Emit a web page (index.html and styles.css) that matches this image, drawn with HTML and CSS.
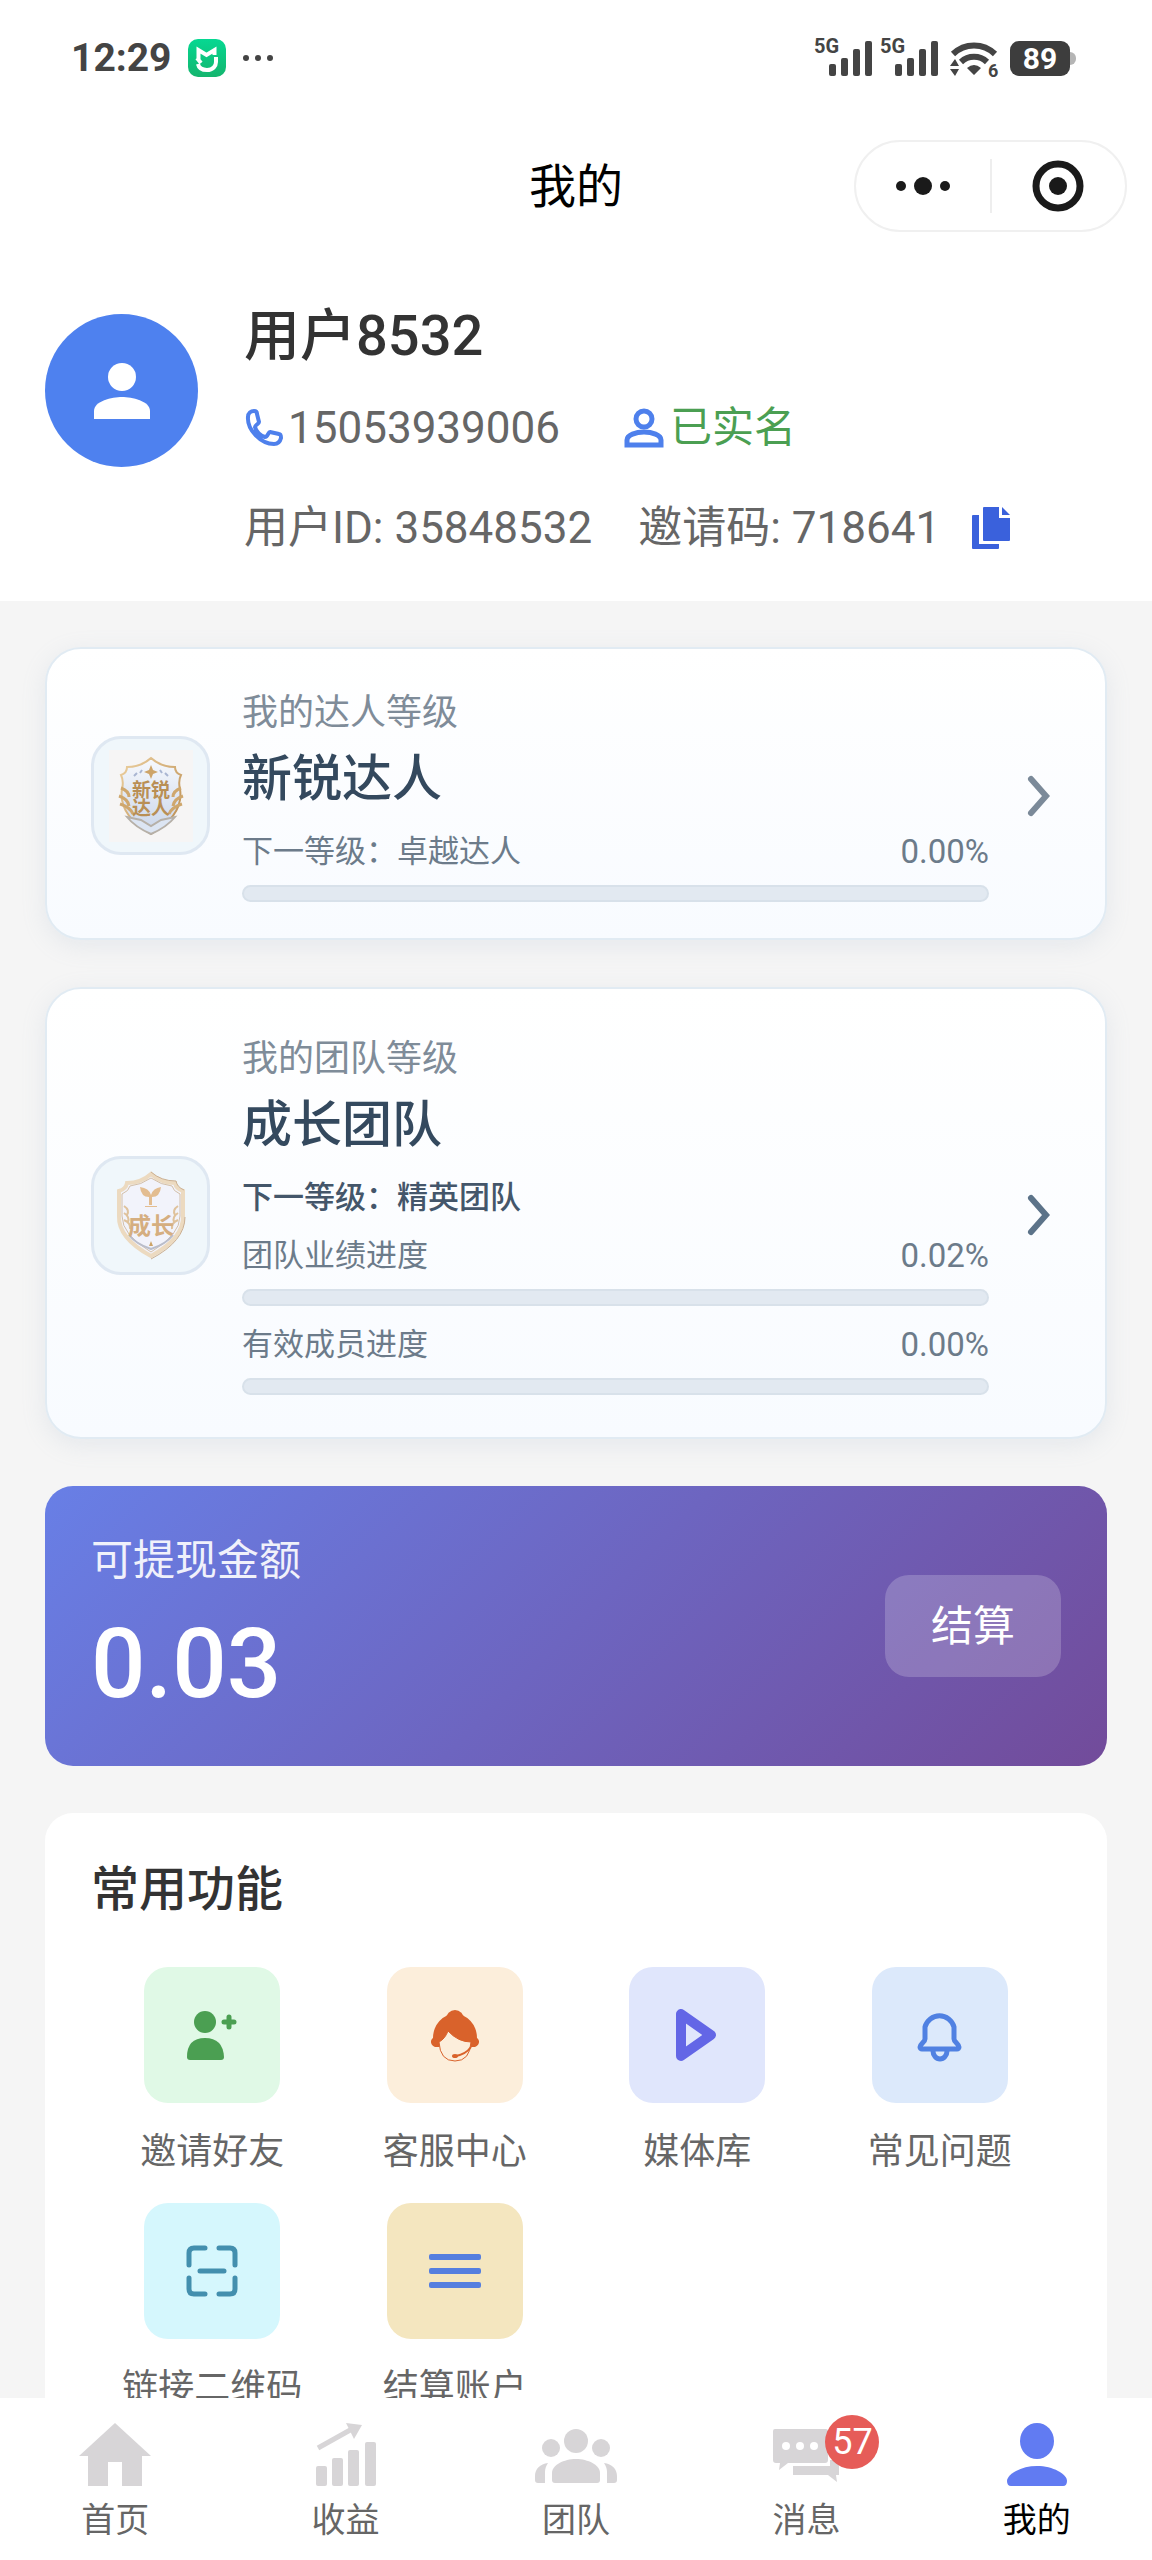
FILE: index.html
```html
<!DOCTYPE html>
<html lang="zh-CN">
<head>
  <meta charset="UTF-8">
  <meta name="viewport" content="width=device-width, initial-scale=1.0">
  <title>我的</title>
  <link rel="stylesheet" href="styles.css">
</head>
<body>
  <div class="app">
    <div class="status-bar">
      <span class="status-time">12:29</span>
      <svg class="status-app" width="38" height="38" viewBox="0 0 38 38">
        <defs>
          <linearGradient id="mi" x1="0" y1="0" x2="0" y2="1">
            <stop offset="0" stop-color="#06d892"/>
            <stop offset="1" stop-color="#14b56e"/>
          </linearGradient>
        </defs>
        <rect width="38" height="38" rx="10" fill="url(#mi)"/>
        <path d="M10.500 20V11l8 5 8-5v5M10 25c1 5 5 6 9 6 6 0 9-4 9-8v-5M9 19l4 5" fill="none" stroke="#fff" stroke-width="4"/>
      </svg>
      <svg width="32" height="8" viewBox="0 0 32 8" fill="#444">
        <circle cx="4" cy="4" r="3"/><circle cx="16" cy="4" r="3"/><circle cx="28" cy="4" r="3"/>
      </svg>
      <div class="status-right">
        <svg width="60" height="48" viewBox="0 -2 60 48" fill="#444">
          <text class="signal-text" x="0" y="17">5G</text>
          <rect x="15" y="28" width="7" height="12" rx="2"/>
          <rect x="27" y="22" width="7" height="18" rx="2"/>
          <rect x="39" y="13" width="7" height="27" rx="2"/>
          <rect x="51" y="5" width="7" height="35" rx="2"/>
        </svg>
        <svg width="60" height="48" viewBox="0 -2 60 48" fill="#444">
          <text class="signal-text" x="0" y="17">5G</text>
          <rect x="15" y="28" width="7" height="12" rx="2"/>
          <rect x="27" y="22" width="7" height="18" rx="2"/>
          <rect x="39" y="13" width="7" height="27" rx="2"/>
          <rect x="51" y="5" width="7" height="35" rx="2"/>
        </svg>
        <svg width="58" height="48" viewBox="-3 -2 58 48" fill="#444">
          <path d="M4 18a30 30 0 0 1 42 0" fill="none" stroke="#444" stroke-width="6"/>
          <path d="M12 26a19 19 0 0 1 26 0" fill="none" stroke="#444" stroke-width="6"/>
          <path d="M18 32q7-6 14 0l-7 7zM1 33h9l-4 7zM1 30h9l-4-7z"/>
          <text class="wifi-text" x="39" y="41">6</text>
        </svg>
        <svg width="66" height="48" viewBox="0 -2 66 48">
          <rect x="52" y="16" width="14" height="13" rx="6" fill="#b5b5b5"/>
          <rect x="0" y="5" width="60" height="35" rx="9" fill="#3d3d3d"/>
          <text class="battery-text" x="30" y="33" text-anchor="middle">89</text>
        </svg>
      </div>
    </div>

    <header class="nav-bar">
      <h1 class="nav-title">我的</h1>
      <div class="capsule">
        <button class="capsule-btn" type="button" aria-label="更多">
          <svg width="56" height="52" viewBox="0 0 56 52" fill="#1a1a1a">
            <circle cx="6" cy="26" r="5"/><circle cx="28" cy="26" r="9"/><circle cx="50" cy="26" r="5"/>
          </svg>
        </button>
        <button class="capsule-btn" type="button" aria-label="关闭">
          <svg width="52" height="52" viewBox="0 0 52 52">
            <circle cx="26" cy="26" r="22" fill="none" stroke="#1a1a1a" stroke-width="7"/>
            <circle cx="26" cy="26" r="9" fill="#1a1a1a"/>
          </svg>
        </button>
      </div>
    </header>

    <main class="content">
      <section class="profile">
        <div class="avatar">
          <svg width="56" height="56" viewBox="0 0 56 56" fill="#fff">
            <circle cx="28" cy="14" r="14"/>
            <path d="M0 56v-8c0-10 18-14 28-14s28 4 28 14v8z"/>
          </svg>
        </div>
        <div class="profile-info">
          <h2 class="profile-name">用户8532</h2>
          <div class="profile-row profile-row--contact">
            <span class="profile-item">
              <svg width="44" height="40" viewBox="0 0 44 40" fill="none" stroke="#4e80ec" stroke-width="4" stroke-linejoin="round">
                <path d="M4 9c0-4 3-6 6-6 2 0 3 1 3 3l2 8c0 2-4 3-4 5 1 5 6 9 10 10 3 0 3-5 5-5l9 2c2 0 2 2 2 4-1 4-3 6-7 6C17 36 3 22 4 9z"/>
              </svg>
              15053939006
            </span>
            <span class="profile-item profile-item--verified">
              <svg width="46" height="40" viewBox="0 0 46 40" fill="none" stroke="#4e80ec" stroke-width="5">
                <circle cx="20" cy="11" r="8"/>
                <path d="M3 37v-5c0-5 9-8 17-8s17 3 17 8v5z"/>
              </svg>
              已实名
            </span>
          </div>
          <div class="profile-row">
            <span>用户ID: 35848532</span>
            <span class="profile-item profile-item--invite">
              邀请码: 718641
              <button class="copy-btn" type="button" aria-label="复制邀请码">
                <svg width="38" height="42" viewBox="0 0 38 42" fill="#3a61dc">
                  <path d="M1 8h6v29h20v4q0 1-1 1H1q-1 0-1-1V9q0-1 1-1z"/>
                  <path d="M12 0h15v11h11v22q0 1-1 1H12q-1 0-1-1V1q0-1 1-1z"/>
                  <path d="M30 0l8 8h-8z"/>
                </svg>
              </button>
            </span>
          </div>
        </div>
      </section>

      <div class="cards">
        <section class="level-card">
          <div class="level-icon">
            <svg width="84" height="92" viewBox="0 0 84 92">
              <defs>
                <linearGradient id="gold" x1="0" y1="0" x2="1" y2="1">
                  <stop offset="0" stop-color="#ecd0a0"/>
                  <stop offset="1" stop-color="#b98a4e"/>
                </linearGradient>
                <linearGradient id="steel" x1="0" y1="0" x2="0" y2="1">
                  <stop offset="0" stop-color="#f7f9fd"/>
                  <stop offset="1" stop-color="#c9d5ea"/>
                </linearGradient>
              </defs>
              <rect width="84" height="92" fill="#f6f5f5"/>
              <path d="M42 8q10 9 24 9 0 6 6 8-3 6-1 14 4 26-29 45Q9 65 13 39q2-8-1-14 6-2 6-8 14 0 24-9z" fill="url(#steel)" stroke="url(#gold)" stroke-width="2"/>
              <path d="M42 15l2 5 5 2-5 2-2 5-2-5-5-2 5-2z" fill="#cda468"/>
              <path d="M12 38q8 3 8 9M10 46q9 3 10 10M11 54q10 3 13 10M72 38q-8 3-8 9M74 46q-9 3-10 10M73 54q-10 3-13 10" fill="none" stroke="#cfa76d" stroke-width="3"/>
              <path d="M18 67l14 3 10 6 10-6 14-3q-8 10-24 17-16-7-24-17z" fill="#dce5f3" stroke="#b6b0a8" stroke-width="2"/>
              <path d="M28 23l-3 3M33 20l-2 3M56 23l3 3M51 20l2 3" stroke="#a9b6d2" stroke-width="2"/>
              <text class="badge-text" x="42" y="47" text-anchor="middle">新锐</text>
              <text class="badge-text" x="42" y="65" text-anchor="middle">达人</text>
            </svg>
          </div>
          <div class="level-body">
            <p class="level-label">我的达人等级</p>
            <h3 class="level-title">新锐达人</h3>
            <div class="progress-head">
              <span>下一等级：卓越达人</span>
              <span class="progress-value">0.00%</span>
            </div>
            <div class="progress" role="progressbar" aria-valuenow="0" aria-label="下一等级"></div>
          </div>
          <svg class="chevron" width="40" height="44" viewBox="0 0 40 44">
            <path d="M10 5l15 17-15 17"/>
          </svg>
        </section>

        <section class="level-card level-card--team">
          <div class="level-icon">
            <svg width="84" height="92" viewBox="0 0 84 92">
              <path d="M42 5q10 9 24 9 1 6 8 8v25q1 22-32 40Q9 69 10 47V22q7-2 8-8 14 0 24-9z" fill="#f2f3fb" stroke="#ecdac0" stroke-width="4"/>
              <path d="M42 3q10 9 25 9 1 6 8 9M42 90q34-18 34-42" fill="none" stroke="#cbb093" stroke-width="1"/>
              <path d="M42 9q10 7 21 8 1 5 8 8v22q0 19-29 36Q13 66 13 47V25q7-3 8-8 11-1 21-8z" fill="none" stroke="#d3bfa8" stroke-width="1"/>
              <path d="M40 28q-8 0-9-10 9 1 11 8 2-7 10-8-1 10-9 10v8h-3zM36 37h12v1H36z" fill="#e3bd91"/>
              <path d="M15 37q6 4 3 9M15 44q6 4 4 9M15 51q7 3 6 9M69 37q-6 4-3 9M69 44q-6 4-4 9M69 51q-7 3-6 9" fill="none" stroke="#dfc29c" stroke-width="2"/>
              <path d="M20 66q7 9 22 14 15-5 22-14" fill="none" stroke="#b9bdcb" stroke-width="2"/>
              <path d="M42 72l2 5h-4z" fill="#cda468"/>
              <text class="badge-text badge-text--team" x="42" y="65" text-anchor="middle">成长</text>
            </svg>
          </div>
          <div class="level-body">
            <p class="level-label">我的团队等级</p>
            <h3 class="level-title">成长团队</h3>
            <p class="level-next">下一等级：精英团队</p>
            <div class="progress-head">
              <span>团队业绩进度</span>
              <span class="progress-value">0.02%</span>
            </div>
            <div class="progress" role="progressbar" aria-valuenow="0.02" aria-label="团队业绩进度"></div>
            <div class="progress-head">
              <span>有效成员进度</span>
              <span class="progress-value">0.00%</span>
            </div>
            <div class="progress" role="progressbar" aria-valuenow="0" aria-label="有效成员进度"></div>
          </div>
          <svg class="chevron" width="40" height="44" viewBox="0 0 40 44">
            <path d="M10 5l15 17-15 17"/>
          </svg>
        </section>

        <section class="wallet">
          <div>
            <p class="wallet-label">可提现金额</p>
            <p class="wallet-amount">0.03</p>
          </div>
          <button class="wallet-btn" type="button">结算</button>
        </section>

        <section class="functions">
          <h2 class="functions-title">常用功能</h2>
          <nav class="functions-grid">
            <a class="function" href="#">
              <span class="function-icon function-icon--green">
                <svg width="60" height="60" viewBox="0 0 60 60" fill="#4b9f52">
                  <circle cx="23" cy="17" r="11"/>
                  <path d="M5 52q0-19 18-19t19 19q0 3-3 3H8q-3 0-3-3z"/>
                  <path d="M47 12v10M42 17h10" stroke="#4b9f52" stroke-width="5" stroke-linecap="round"/>
                </svg>
              </span>
              邀请好友
            </a>
            <a class="function" href="#">
              <span class="function-icon function-icon--orange">
                <svg width="60" height="60" viewBox="0 0 60 60">
                  <circle cx="30" cy="14" r="9" fill="#d9622b"/>
                  <path d="M8 33a22 24 0 0 1 44 0c3 2 3 7-2 9H10c-5-2-5-7-2-9z" fill="#d9622b"/>
                  <path d="M14 37q6-3 9-11 10 11 23 11-1 19-16 19T14 37z" fill="#fceedb" stroke="#d9622b" stroke-width="1"/>
                  <path d="M46 42q-5 7-15 9" fill="none" stroke="#d9622b" stroke-width="2"/>
                  <ellipse cx="30" cy="51" rx="3" ry="2" fill="#d9622b"/>
                </svg>
              </span>
              客服中心
            </a>
            <a class="function" href="#">
              <span class="function-icon function-icon--indigo">
                <svg width="60" height="60" viewBox="0 0 60 60">
                  <path d="M14 9v42l30-21z" fill="none" stroke="#6366e6" stroke-width="10" stroke-linejoin="round"/>
                </svg>
              </span>
              媒体库
            </a>
            <a class="function" href="#">
              <span class="function-icon function-icon--blue">
                <svg width="60" height="60" viewBox="0 0 60 60" fill="none" stroke="#5081e2" stroke-width="5">
                  <path d="M15 34V22a15 15 0 0 1 29 0v12c0 3 5 5 5 8a2 2 0 0 1-2 2H12a2 2 0 0 1-2-2c0-3 5-5 5-8z"/>
                  <path d="M23 44v2a7 8 0 0 0 14 0v-2"/>
                </svg>
              </span>
              常见问题
            </a>
            <a class="function" href="#">
              <span class="function-icon function-icon--cyan">
                <svg width="60" height="60" viewBox="0 0 60 60" fill="none" stroke="#438fae" stroke-width="5" stroke-linecap="round">
                  <path d="M7 24V12q0-5 5-5h11M37 7h11q5 0 5 5v12M53 37v11q0 5-5 5H37M23 53H12q-5 0-5-5V37M18 30h24"/>
                </svg>
              </span>
              链接二维码
            </a>
            <a class="function" href="#">
              <span class="function-icon function-icon--yellow">
                <svg width="60" height="60" viewBox="0 0 60 60" fill="#557fdf">
                  <rect x="4" y="13" width="52" height="6" rx="2"/>
                  <rect x="4" y="27" width="52" height="6" rx="2"/>
                  <rect x="4" y="41" width="52" height="6" rx="2"/>
                </svg>
              </span>
              结算账户
            </a>
          </nav>
        </section>
      </div>
    </main>

    <nav class="tab-bar">
      <a class="tab" href="#">
        <svg width="72" height="63" viewBox="0 0 72 63" fill="#d7d5d7">
          <path d="M36 0l36 33h-9v30H43V39H29v24H9V33H0z"/>
        </svg>
        首页
      </a>
      <a class="tab" href="#">
        <svg width="60" height="63" viewBox="0 0 60 63" fill="#d7d5d7">
          <rect x="0" y="43" width="11" height="20" rx="2"/>
          <rect x="16" y="35" width="11" height="28" rx="2"/>
          <rect x="32" y="27" width="11" height="36" rx="2"/>
          <rect x="49" y="19" width="11" height="44" rx="2"/>
          <path d="M2 25L36 6" stroke="#d7d5d7" stroke-width="5"/>
          <path d="M30 0l16 2-8 14z"/>
        </svg>
        收益
      </a>
      <a class="tab" href="#">
        <svg width="82" height="63" viewBox="0 -6 82 63" fill="#d7d5d7">
          <circle cx="41" cy="12" r="12"/>
          <circle cx="16" cy="19" r="9"/>
          <circle cx="66" cy="19" r="9"/>
          <path d="M17 51v-7c0-8 12-14 24-14s24 6 24 14v7q0 3-3 3H20q-3 0-3-3z"/>
          <path d="M0 51v-4c0-7 5-12 13-13-2 3-3 6-3 9v11H3q-3 0-3-3zM82 51v-4c0-7-5-12-13-13 2 3 3 6 3 9v11h7q3 0 3-3z"/>
        </svg>
        团队
      </a>
      <a class="tab" href="#">
        <span class="tab-icon">
          <svg width="66" height="63" viewBox="0 -6 66 63" fill="#d7d5d7">
            <path d="M2 0h51q2 0 2 2v29q0 3-3 3H15l-9 7 1-7H3q-3 0-3-3V2q0-2 2-2z"/>
            <path d="M20 37h37v-6h9v15h-3l1 7-9-7H20z"/>
            <g fill="#fff"><circle cx="13" cy="17" r="4"/><circle cx="27" cy="17" r="4"/><circle cx="41" cy="17" r="4"/></g>
          </svg>
          <span class="tab-badge">57</span>
        </span>
        消息
      </a>
      <a class="tab tab--active" href="#">
        <svg width="60" height="63" viewBox="0 0 60 63" fill="#617bf2">
          <ellipse cx="30" cy="18" rx="17" ry="18"/>
          <path d="M4 63q-4 0-4-5c0-7 14-15 30-15s30 8 30 15q0 5-4 5z"/>
        </svg>
        我的
      </a>
    </nav>
  </div>
</body>
</html>
```
FILE: styles.css
```css
:root {
  --text-color: #333;
  --text-color-light: #666;
  --slate: #34495e;
  --slate-light: #7f8c99;
  --page-background-color: #f5f5f5;
  --gap: 46px;
  --side: 45px;
}
* {
  margin: 0;
  padding: 0;
  box-sizing: border-box;
}
body {
  font-family: Roboto, "Noto Sans CJK SC", sans-serif;
  color: var(--text-color);
  background-color: var(--page-background-color);
}
a {
  color: inherit;
  text-decoration: none;
}
button {
  font: inherit;
  color: inherit;
  background: none;
  border: 0;
}
svg {
  display: block;
  flex-shrink: 0;
}
.app {
  display: flex;
  flex-direction: column;
  height: 100vh;
}

/* Status bar */

.status-bar {
  display: flex;
  align-items: center;
  height: 116px;
  padding: 0 76px 0 71px;
  background-color: #fff;
}
.status-time {
  font-size: 39px;
  font-weight: 700;
  color: #444;
}
.status-app {
  margin: 0 16px;
}
.status-right {
  display: flex;
  gap: 6px;
  margin-left: auto;
}
.signal-text {
  font-size: 20px;
  font-weight: 700;
}
.wifi-text {
  font-size: 18px;
  font-weight: 700;
}
.battery-text {
  font-size: 30px;
  font-weight: 700;
  fill: #fff;
}

/* Navigation bar */

.nav-bar {
  position: relative;
  display: flex;
  align-items: center;
  justify-content: center;
  height: 138px;
  padding-bottom: 6px;
  background-color: #fff;
}
.nav-title {
  font-size: 47px;
  font-weight: 400;
  color: #000;
}
.capsule {
  position: absolute;
  top: 24px;
  right: 25px;
  display: flex;
  align-items: center;
  width: 273px;
  height: 92px;
  border: 2px solid #f0f0f0;
  border-radius: 46px;
}
.capsule-btn {
  display: flex;
  flex: 1;
  align-items: center;
  justify-content: center;
  height: 54px;
}
.capsule-btn + .capsule-btn {
  border-left: 2px solid #eee;
}

/* Scrolling content */

.content {
  flex: 1;
  min-height: 0;
  overflow-y: auto;
  scrollbar-width: none;
}
.profile {
  display: flex;
  gap: var(--gap);
  padding: 60px var(--side) 43px;
  background-color: #fff;
}
.avatar {
  display: flex;
  flex-shrink: 0;
  align-items: center;
  justify-content: center;
  width: 153px;
  height: 153px;
  border-radius: 50%;
  background-color: #4e81ef;
}
.profile-info {
  display: flex;
  flex-direction: column;
  gap: 40px;
}
.profile-name {
  font-size: 56px;
  font-weight: 500;
  line-height: 44px;
}
.profile-row {
  display: flex;
  align-items: center;
  gap: var(--gap);
  font-size: 44px;
  line-height: 60px;
  color: var(--text-color-light);
}
.profile-row--contact {
  gap: 64px;
}
.profile-item {
  display: flex;
  align-items: center;
}
.profile-item--verified {
  font-size: 42px;
  color: #4b9f52;
}
.profile-item--invite {
  gap: 32px;
}

.cards {
  display: flex;
  flex-direction: column;
  gap: 47px;
  padding: var(--gap) var(--side);
}

/* Level cards */

.level-card {
  display: flex;
  align-items: center;
  gap: 32px;
  padding: 40px 44px 36px;
  border: 2px solid #e1ebf3;
  border-radius: 36px;
  background-image: linear-gradient(#fff, #f8fbff);
  box-shadow: 0 6px 24px rgba(150, 170, 190, 0.16);
}
.level-card--team {
  padding: 46px 44px 42px;
}
.level-icon {
  display: flex;
  flex-shrink: 0;
  align-items: center;
  justify-content: center;
  width: 119px;
  height: 119px;
  border: 3px solid #dfe8f2;
  border-radius: 30px;
  background-color: #f0f7fb;
}
.badge-text {
  font-size: 19px;
  font-weight: 700;
  fill: #b98f55;
}
.badge-text--team {
  font-size: 23px;
  fill: #d5ae80;
}
.level-body {
  flex: 1;
}
.level-label {
  font-size: 36px;
  line-height: 48px;
  color: var(--slate-light);
}
.level-title {
  margin: 10px 0 19px;
  font-size: 50px;
  font-weight: 500;
  line-height: 64px;
  color: var(--slate);
}
.level-next {
  margin-bottom: 14px;
  font-size: 31px;
  font-weight: 500;
  line-height: 44px;
  color: #44566a;
}
.progress-head {
  display: flex;
  justify-content: space-between;
  margin-bottom: 11px;
  font-size: 31px;
  line-height: 44px;
  color: #6c7b8a;
}
.progress-value {
  font-size: 33px;
}
.progress {
  height: 17px;
  border: 2px solid #d8e1ea;
  border-radius: 9px;
  background-color: #e2e9f1;
}
.progress + .progress-head {
  margin-top: 17px;
}
.chevron {
  fill: none;
  stroke: #7b8a99;
  stroke-width: 6;
  stroke-linecap: round;
}
.level-card--team .chevron {
  stroke: #5c7389;
}

/* Wallet */

.wallet {
  display: flex;
  align-items: center;
  justify-content: space-between;
  padding: 51px var(--gap);
  border-radius: 28px;
  color: #fff;
  background-image: linear-gradient(135deg, #687fe6, #724b9a);
}
.wallet-label {
  margin-bottom: 28px;
  font-size: 42px;
  line-height: 48px;
  opacity: 0.9;
}
.wallet-amount {
  font-size: 96px;
  font-weight: 500;
  line-height: 102px;
}
.wallet-btn {
  padding: 2px var(--gap) 0;
  border-radius: 24px;
  font-size: 42px;
  line-height: 100px;
  background-color: rgba(255, 255, 255, 0.2);
}

/* Functions */

.functions {
  padding: var(--gap);
  border-radius: 28px;
  background-color: #fff;
}
.functions-title {
  margin-bottom: var(--gap);
  font-size: 48px;
  font-weight: 500;
  line-height: 62px;
}
.functions-grid {
  display: grid;
  grid-template-columns: repeat(4, 1fr);
  row-gap: 25px;
}
.function {
  display: flex;
  flex-direction: column;
  align-items: center;
  gap: 23px;
  font-size: 36px;
  line-height: 52px;
  color: var(--text-color-light);
}
.function-icon {
  display: flex;
  align-items: center;
  justify-content: center;
  width: 136px;
  height: 136px;
  border-radius: 24px;
}
.function-icon--green { background-color: #e0f9e6; }
.function-icon--orange { background-color: #fceedb; }
.function-icon--indigo { background-color: #e0e6fc; }
.function-icon--blue { background-color: #dce9fb; }
.function-icon--cyan { background-color: #d5f7fd; }
.function-icon--yellow { background-color: #f4e6bf; }

/* Tab bar */

.tab-bar {
  display: flex;
  height: 162px;
  padding-top: 25px;
  background-color: #fff;
}
.tab {
  display: flex;
  flex: 1;
  flex-direction: column;
  align-items: center;
  gap: 11px;
  font-size: 34px;
  line-height: 46px;
  color: var(--text-color-light);
}
.tab--active {
  color: #000;
}
.tab-icon {
  position: relative;
}
.tab-badge {
  position: absolute;
  top: -8px;
  left: 52px;
  width: 54px;
  height: 54px;
  border-radius: 50%;
  font-size: 36px;
  line-height: 54px;
  text-align: center;
  color: #fff;
  background-color: #e65c58;
}
```
